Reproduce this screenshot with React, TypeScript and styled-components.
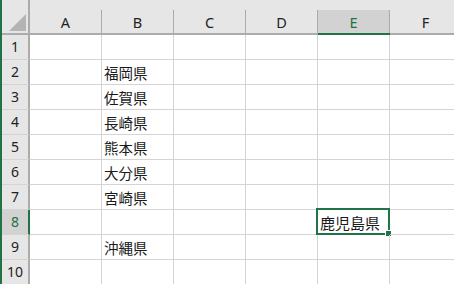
import React from "react";
import styled, { createGlobalStyle, css } from "styled-components";

const GREEN = "#217346";
const GRID = "#d4d4d4";
const HEADER_BG = "#e6e6e6";
const HEADER_SEL = "#d2d2d2";
const HEADER_LINE = "#ababab";

const Global = createGlobalStyle`
  html, body { margin: 0; padding: 0; background: #ffffff; overflow: hidden; }
  body { font-family: "Noto Sans", "Noto Sans CJK JP", sans-serif; }
`;

const Window = styled.div`
  display: flex;
  width: 454px;
  height: 284px;
  overflow: hidden;
  background: #fff;
`;

const Edge = styled.div`
  flex: 0 0 2px;
  background: ${GREEN};
`;

const Sheet = styled.div`
  display: grid;
  grid-template-columns: 28px repeat(6, 72px);
  grid-template-rows: 35px repeat(10, 25px);
  flex: 0 0 auto;
`;

const Corner = styled.div`
  position: relative;
  background: ${HEADER_BG};
  border-right: 2px solid ${HEADER_LINE};
  border-bottom: 2px solid ${HEADER_LINE};
  box-sizing: border-box;
  display: flex;
  align-items: flex-end;
  justify-content: flex-end;
  padding: 0 1px 1px 0;
`;

const ColHead = styled.div<{ $sel?: boolean }>`
  background: ${HEADER_BG};
  padding-top: 10px;
  box-sizing: border-box;
  border-bottom: 2px solid ${(p) => (p.$sel ? GREEN : HEADER_LINE)};
  display: flex;
`;

const ColLabel = styled.div<{ $sel?: boolean }>`
  flex: 1;
  display: flex;
  align-items: center;
  justify-content: center;
  border-right: 1px solid ${HEADER_LINE};
  background: ${(p) => (p.$sel ? HEADER_SEL : HEADER_BG)};
  color: ${(p) => (p.$sel ? GREEN : "#222")};
  font-family: "Noto Sans", sans-serif;
  font-size: 14.5px;
`;

const RowHead = styled.div<{ $sel?: boolean }>`
  box-sizing: border-box;
  background: ${(p) => (p.$sel ? HEADER_SEL : HEADER_BG)};
  border-right: 2px solid ${(p) => (p.$sel ? GREEN : HEADER_LINE)};
  border-bottom: 1px solid ${GRID};
  color: ${(p) => (p.$sel ? GREEN : "#222")};
  display: flex;
  align-items: center;
  justify-content: center;
  font-family: "Noto Sans", sans-serif;
  font-size: 14px;
  padding-bottom: 1px;
`;

const Cell = styled.div<{ $active?: boolean }>`
  position: relative;
  box-sizing: border-box;
  border-right: 1px solid ${GRID};
  border-bottom: 1px solid ${GRID};
  display: flex;
  align-items: center;
  padding-left: 2px;
  color: #1a1a1a;
  font-family: "Noto Sans CJK JP", sans-serif;
  white-space: nowrap;
  font-size: 14.5px;
  ${(p) =>
    p.$active &&
    css`
      font-size: 15px;
    `}
`;

const Selection = styled.div`
  position: absolute;
  left: -2px;
  top: -2px;
  width: 74px;
  height: 27px;
  box-sizing: border-box;
  border: 2px solid ${GREEN};
  pointer-events: none;
`;

const FillHandle = styled.div`
  position: absolute;
  right: -4px;
  bottom: -4px;
  width: 5px;
  height: 5px;
  background: ${GREEN};
  border: 1px solid #fff;
`;

const cols = ["A", "B", "C", "D", "E", "F"];
const data: Record<string, string> = {
  B2: "福岡県",
  B3: "佐賀県",
  B4: "長崎県",
  B5: "熊本県",
  B6: "大分県",
  B7: "宮崎県",
  E8: "鹿児島県",
  B9: "沖縄県",
};
const active = "E8";

export default function App() {
  const rows = Array.from({ length: 10 }, (_, i) => i + 1);
  return (
    <Window>
      <Global />
      <Edge />
      <Sheet>
        <Corner>
          <svg width="18" height="18" viewBox="0 0 18 18">
            <polygon points="17,0 17,17 0,17" fill="#b4b4b4" />
          </svg>
        </Corner>
        {cols.map((c) => (
          <ColHead key={c} $sel={c === "E"}>
            <ColLabel $sel={c === "E"}>{c}</ColLabel>
          </ColHead>
        ))}
        {rows.map((r) => (
          <React.Fragment key={r}>
            <RowHead $sel={r === 8}>{r}</RowHead>
            {cols.map((c) => {
              const id = `${c}${r}`;
              const isActive = id === active;
              return (
                <Cell key={id} $active={isActive}>
                  {data[id]}
                  {isActive && (
                    <Selection>
                      <FillHandle />
                    </Selection>
                  )}
                </Cell>
              );
            })}
          </React.Fragment>
        ))}
      </Sheet>
    </Window>
  );
}
